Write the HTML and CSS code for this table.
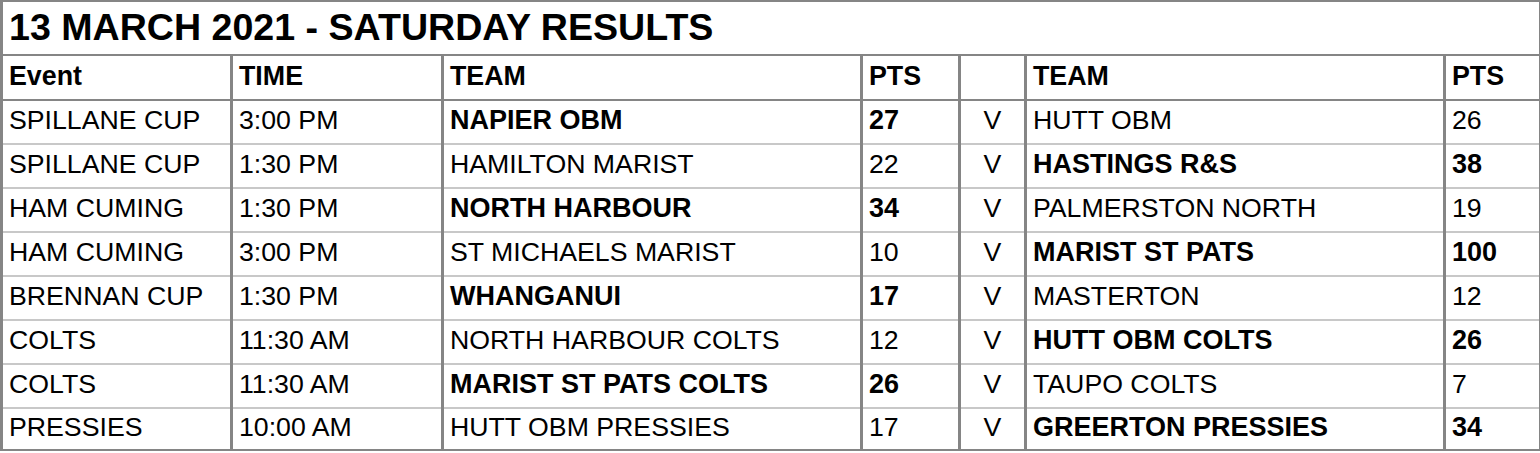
FILE: index.html
```html
<!DOCTYPE html>
<html>
<head>
<meta charset="utf-8">
<link rel="stylesheet" href="styles.css">
</head>
<body>
<table class="results">
  <colgroup>
    <col class="c-event">
    <col class="c-time">
    <col class="c-team">
    <col class="c-pts">
    <col class="c-v">
    <col class="c-team2">
    <col class="c-pts2">
  </colgroup>
  <thead>
    <tr class="title-row"><th colspan="7" class="title">13 MARCH 2021 - SATURDAY RESULTS</th></tr>
    <tr class="head-row">
      <th>Event</th><th>TIME</th><th>TEAM</th><th>PTS</th><th></th><th>TEAM</th><th>PTS</th>
    </tr>
  </thead>
  <tbody>
    <tr><td>SPILLANE CUP</td><td>3:00 PM</td><td class="win">NAPIER OBM</td><td class="win">27</td><td class="vs">V</td><td>HUTT OBM</td><td>26</td></tr>
    <tr><td>SPILLANE CUP</td><td>1:30 PM</td><td>HAMILTON MARIST</td><td>22</td><td class="vs">V</td><td class="win">HASTINGS R&amp;S</td><td class="win">38</td></tr>
    <tr><td>HAM CUMING</td><td>1:30 PM</td><td class="win">NORTH HARBOUR</td><td class="win">34</td><td class="vs">V</td><td>PALMERSTON NORTH</td><td>19</td></tr>
    <tr><td>HAM CUMING</td><td>3:00 PM</td><td>ST MICHAELS MARIST</td><td>10</td><td class="vs">V</td><td class="win">MARIST ST PATS</td><td class="win">100</td></tr>
    <tr><td>BRENNAN CUP</td><td>1:30 PM</td><td class="win">WHANGANUI</td><td class="win">17</td><td class="vs">V</td><td>MASTERTON</td><td>12</td></tr>
    <tr><td>COLTS</td><td>11:30 AM</td><td>NORTH HARBOUR COLTS</td><td>12</td><td class="vs">V</td><td class="win">HUTT OBM COLTS</td><td class="win">26</td></tr>
    <tr><td>COLTS</td><td>11:30 AM</td><td class="win">MARIST ST PATS COLTS</td><td class="win">26</td><td class="vs">V</td><td>TAUPO COLTS</td><td>7</td></tr>
    <tr><td>PRESSIES</td><td>10:00 AM</td><td>HUTT OBM PRESSIES</td><td>17</td><td class="vs">V</td><td class="win">GREERTON PRESSIES</td><td class="win">34</td></tr>
  </tbody>
</table>
</body>
</html>
```

FILE: styles.css
```css
html, body {
  margin: 0;
  padding: 0;
  background: #ffffff;
}

body {
  font-family: "Liberation Sans", Arial, sans-serif;
  color: #000000;
}

.results {
  border-collapse: collapse;
  table-layout: fixed;
  width: 1539px;
  border: 2px solid #858585;
}

.c-event { width: 230px; }
.c-time { width: 211px; }
.c-team { width: 419px; }
.c-pts { width: 98px; }
.c-v { width: 66px; }
.c-team2 { width: 419px; }
.c-pts2 { width: 96px; }

.results th,
.results td {
  padding: 0 0 0 6px;
  text-align: left;
  white-space: nowrap;
  border-left: 3px solid #858585;
  border-right: 3px solid #858585;
  line-height: 1;
}

.title-row th {
  height: 52px;
  font-size: 37.6px;
  font-weight: bold;
  padding-left: 6px;
  border-bottom: 2px solid #858585;
  vertical-align: middle;
}

.head-row th {
  height: 40px;
  font-size: 26.8px;
  font-weight: bold;
  border-bottom: 2px solid #858585;
  vertical-align: middle;
  padding-bottom: 3px;
}

.results tbody td {
  height: 39px;
  padding-bottom: 3px;
  font-size: 26.7px;
  font-weight: normal;
  border-bottom: 2px solid #c8c8c8;
  vertical-align: middle;
}

.results tbody tr:last-child td {
  height: 37px;
  border-bottom: 2px solid #858585;
}

.results td.win {
  font-weight: bold;
  font-size: 27px;
}

.results td.vs {
  text-align: center;
  padding-left: 0;
}
```
